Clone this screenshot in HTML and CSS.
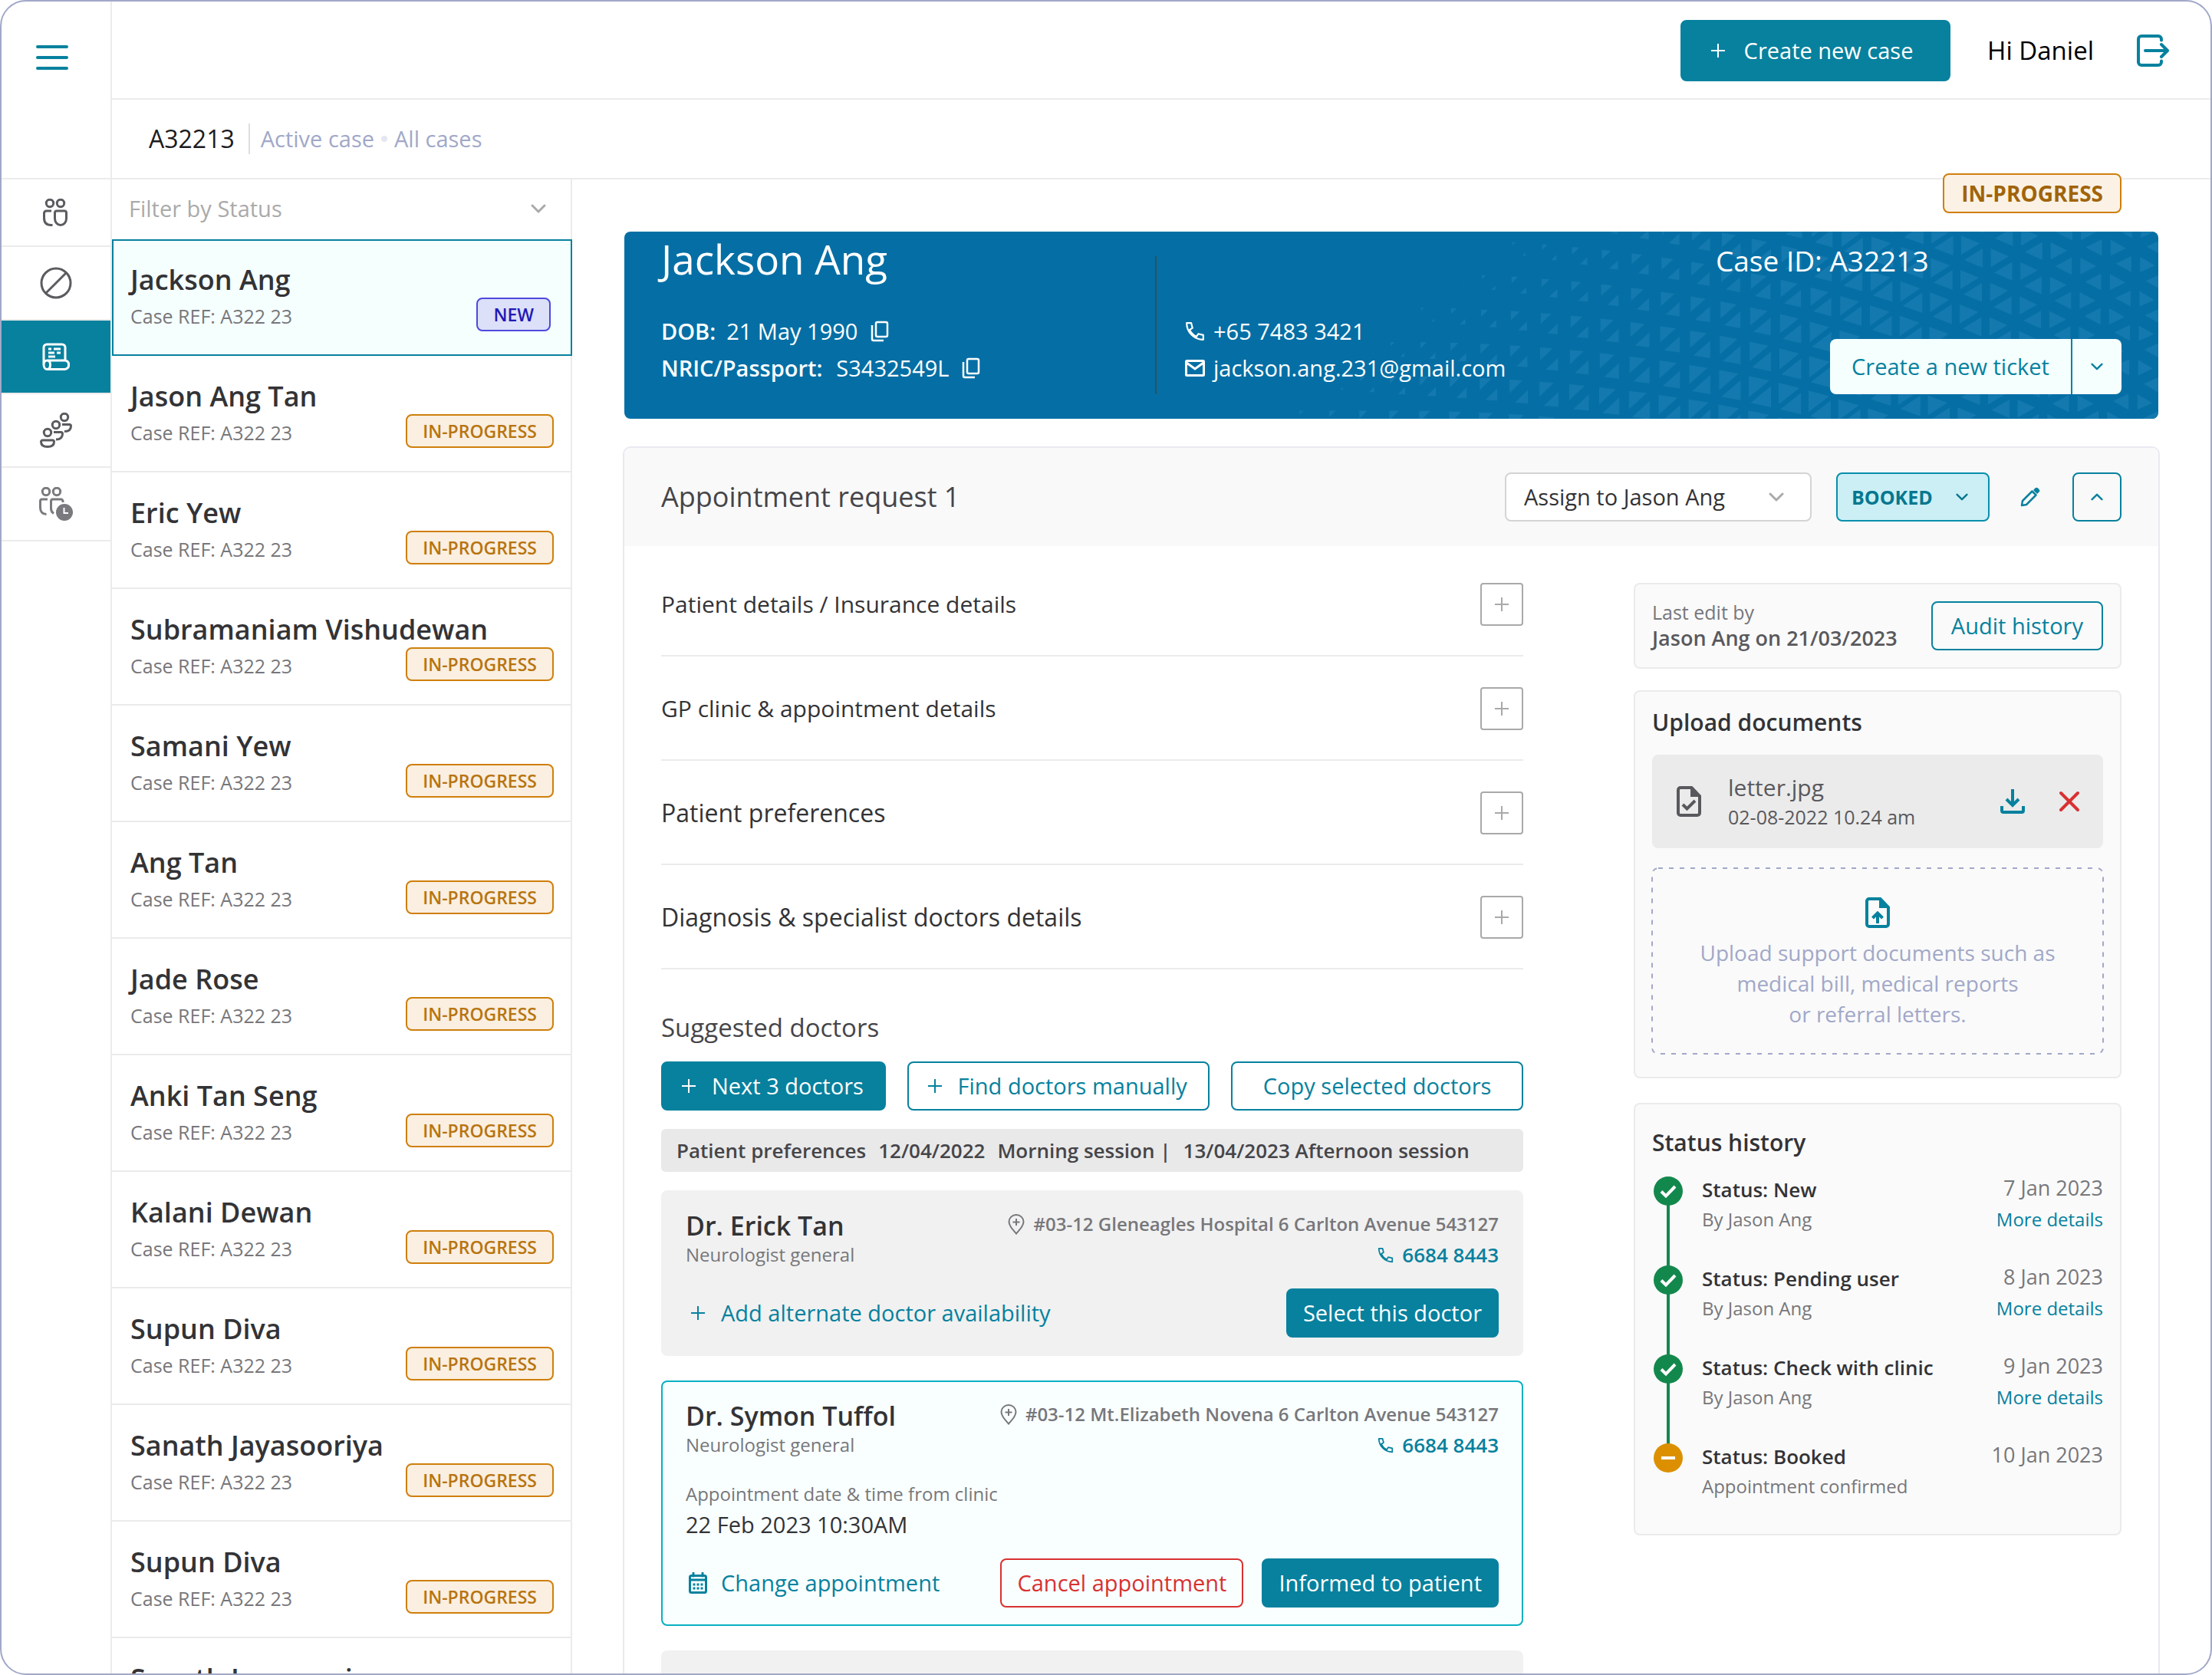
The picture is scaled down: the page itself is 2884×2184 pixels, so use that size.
FILE: index.html
```html
<!DOCTYPE html>
<html lang="en">
<head>
<meta charset="utf-8">
<title>Case A32213</title>
<meta name="viewport" content="width=device-width, initial-scale=1">
<link rel="stylesheet" href="styles.css">
</head>
<body>
<svg class="sprite" aria-hidden="true">
  <symbol id="plus" viewBox="0 0 20 20"><path d="M10 1v18M1 10h18" fill="none" stroke="currentColor" stroke-width="2"/></symbol>
  <symbol id="chevron" viewBox="0 0 20 12"><path d="M2 2l8 8 8-8" fill="none" stroke="currentColor" stroke-width="3" stroke-linecap="round" stroke-linejoin="round"/></symbol>
  <symbol id="phone" viewBox="0 0 24 24"><path d="M2 2h5.500l1.500 6-3.500 2.200c1.800 3.800 4.500 6.500 8.300 8.300l2.200-3.500 6 1.500V22C11 22 2 13 2 2z" fill="none" stroke="currentColor" stroke-width="2" stroke-linejoin="round"/></symbol>
  <symbol id="copy" viewBox="0 0 24 28"><path d="M9 2h11a2 2 0 0 1 2 2v15a2 2 0 0 1-2 2H9a2 2 0 0 1-2-2V4a2 2 0 0 1 2-2zM2 6v18a2 2 0 0 0 2 2h13" fill="none" stroke="currentColor" stroke-width="2.500"/></symbol>
  <symbol id="pin" viewBox="0 0 22 27"><path d="M11 25.500C5 18.500 1.500 14.500 1.500 10a9.500 9 0 0 1 19 0c0 4.500-3.500 8.500-9.500 15.500zM11 6v9M6.500 10.500h9" fill="none" stroke="currentColor" stroke-width="2"/></symbol>
</svg>
<div class="app">
  <nav class="rail" aria-label="Sections">
    <button class="rail-menu" type="button" aria-label="Menu">
      <svg width="42" height="34" viewBox="0 0 42 34"><path d="M2 3h38M2 17h38M2 31h38" stroke="currentColor" stroke-width="4" stroke-linecap="round"/></svg>
    </button>
    <a class="rail-item rail-first" href="#patients" aria-label="Patients">
      <svg width="32" height="36" viewBox="0 0 32 36" fill="none" stroke="currentColor" stroke-width="3"><circle cx="9" cy="6" r="4.700"/><circle cx="23" cy="6" r="4.700"/><path d="M11 16H4.500a3 3 0 0 0-3 3v6c0 6 3 9.500 9 9.500h2M18 16h10a2.500 2.500 0 0 1 2.500 2.500V26a7.500 8.500 0 0 1-15 0v-7.500A2.500 2.500 0 0 1 18 16z"/></svg>
    </a>
    <a class="rail-item" href="#blocked" aria-label="Blocked">
      <svg width="42" height="42" viewBox="0 0 42 42" fill="none" stroke="currentColor" stroke-width="3"><circle cx="21" cy="21" r="19"/><path d="M8 34L34 8"/></svg>
    </a>
    <a class="rail-item rail-active" href="#cases" aria-label="Cases">
      <svg width="36" height="36" viewBox="0 0 36 36" fill="none" stroke="currentColor" stroke-width="3"><path d="M2 29V6a4 4 0 0 1 4-4h20a4 4 0 0 1 4 4v17M6.500 23H30a5 5 0 0 1 4.500 6 5 5 0 0 1-5 5.500H6.500M6.500 23c-2.500 0-4.500 2-4.500 5.500s2 6 4.500 6 4-2.500 4-6-1.500-5.500-4-5.500z"/><path d="M8 8h4M15 8h9M8 13h8M19 13h5M8 18h9"/></svg>
    </a>
    <a class="rail-item" href="#teams" aria-label="Teams">
      <svg width="42" height="46" viewBox="0 0 42 46" fill="none" stroke="currentColor" stroke-width="3"><circle cx="10" cy="26" r="4.700"/><circle cx="21" cy="16" r="4.700"/><circle cx="32" cy="6" r="4.700"/><path d="M3.500 36h13a2 2 0 0 1 2 2c0 4-3 6.500-8.500 6.500S1.500 42 1.500 38a2 2 0 0 1 2-2zM18 25.500h9.500a2 2 0 0 1 2 2c0 5-3 7.500-8.500 7.500M29 15.500h9.500a2 2 0 0 1 2 2c0 5-3 7-8.500 7"/></svg>
    </a>
    <a class="rail-item rail-muted" href="#waiting" aria-label="Waiting">
      <svg width="44" height="44" viewBox="0 0 44 44" fill="none" stroke="currentColor" stroke-width="3"><circle cx="9" cy="6" r="4.700"/><circle cx="23" cy="6" r="4.700"/><path d="M11 16H4a2.500 2.500 0 0 0-2.500 2.500V27c0 5 3 8.500 8 8.500M31 20v-1.500a2.500 2.500 0 0 0-2.500-2.500H18a2.500 2.500 0 0 0-2.500 2.500V28c0 3 1 5 3.500 6.500"/><circle cx="33" cy="33" r="11" fill="currentColor" stroke="none"/><path d="M32.500 27v7H38" stroke="#fff" stroke-width="2"/></svg>
    </a>
  </nav>

  <div class="page">
    <header class="topbar">
      <button class="btn btn-solid btn-create" type="button"><svg class="i-plus"><use href="#plus"/></svg>Create new case</button>
      <span class="greeting">Hi Daniel</span>
      <button class="icon-btn logout" type="button" aria-label="Log out">
        <svg width="42" height="42" viewBox="0 0 42 42" fill="none" stroke="currentColor" stroke-width="4" stroke-linecap="round" stroke-linejoin="round"><path d="M32 7.500V6a4 4 0 0 0-4-4H6a4 4 0 0 0-4 4v30a4 4 0 0 0 4 4h22a4 4 0 0 0 4-4v-1.500M11 21h28M32 13l8 8-8 8"/></svg>
      </button>
    </header>

    <div class="crumbs">
      <strong class="crumb-id">A32213</strong>
      <a href="#active">Active case</a>
      <span class="crumb-dot"></span>
      <a href="#all">All cases</a>
    </div>

    <div class="work">
      <aside class="list">
        <label class="filter">
          <select aria-label="Filter by Status"><option>Filter by Status</option></select>
          <svg class="i-chev"><use href="#chevron"/></svg>
        </label>
        <article class="case case-active"><h3>Jackson Ang</h3><p>Case REF: A322 23 <span class="tag tag-new">NEW</span></p></article>
        <article class="case"><h3>Jason Ang Tan</h3><p>Case REF: A322 23 <span class="tag">IN-PROGRESS</span></p></article>
        <article class="case"><h3>Eric Yew</h3><p>Case REF: A322 23 <span class="tag">IN-PROGRESS</span></p></article>
        <article class="case"><h3>Subramaniam Vishudewan</h3><p>Case REF: A322 23 <span class="tag">IN-PROGRESS</span></p></article>
        <article class="case"><h3>Samani Yew</h3><p>Case REF: A322 23 <span class="tag">IN-PROGRESS</span></p></article>
        <article class="case"><h3>Ang Tan</h3><p>Case REF: A322 23 <span class="tag">IN-PROGRESS</span></p></article>
        <article class="case"><h3>Jade Rose</h3><p>Case REF: A322 23 <span class="tag">IN-PROGRESS</span></p></article>
        <article class="case"><h3>Anki Tan Seng</h3><p>Case REF: A322 23 <span class="tag">IN-PROGRESS</span></p></article>
        <article class="case"><h3>Kalani Dewan</h3><p>Case REF: A322 23 <span class="tag">IN-PROGRESS</span></p></article>
        <article class="case"><h3>Supun Diva</h3><p>Case REF: A322 23 <span class="tag">IN-PROGRESS</span></p></article>
        <article class="case"><h3>Sanath Jayasooriya</h3><p>Case REF: A322 23 <span class="tag">IN-PROGRESS</span></p></article>
        <article class="case"><h3>Supun Diva</h3><p>Case REF: A322 23 <span class="tag">IN-PROGRESS</span></p></article>
        <article class="case"><h3>Sanath Jayasooriya</h3></article>
      </aside>

      <main class="main">
        <span class="tag tag-big">IN-PROGRESS</span>

        <section class="banner">
          <svg class="banner-pattern" width="1160" height="244" viewBox="840 0 1160 244" aria-hidden="true"><path id="pattern"/></svg>
          <div class="who">
            <h1>Jackson Ang</h1>
            <p><b>DOB:</b><span class="dob">21 May 1990</span><button class="icon-btn" type="button" aria-label="Copy date of birth"><svg class="i-copy"><use href="#copy"/></svg></button></p>
            <p><b>NRIC/Passport:</b><span class="nric">S3432549L</span><button class="icon-btn" type="button" aria-label="Copy NRIC"><svg class="i-copy"><use href="#copy"/></svg></button></p>
          </div>
          <div class="contact">
            <p><svg class="i-contact"><use href="#phone"/></svg>+65 7483 3421</p>
            <p><svg class="i-contact" viewBox="0 0 26 24" fill="none" stroke="currentColor" stroke-width="3"><rect x="1.500" y="2.500" width="23" height="19" rx="1"/><path d="M2 5l11 8 11-8"/></svg>jackson.ang.231@gmail.com</p>
          </div>
          <div class="case-side">
            <p class="case-id">Case ID: A32213</p>
            <div class="split">
              <button type="button">Create a new ticket</button>
              <button class="split-more" type="button" aria-label="More ticket options"><svg class="i-chev-s"><use href="#chevron"/></svg></button>
            </div>
          </div>
        </section>

        <section class="panel">
          <header class="panel-head">
            <h2>Appointment request 1</h2>
            <label class="assign">
              <select aria-label="Assignee"><option>Assign to Jason Ang</option></select>
              <svg class="i-chev"><use href="#chevron"/></svg>
            </label>
            <button class="booked" type="button">BOOKED<svg class="i-chev-s"><use href="#chevron"/></svg></button>
            <button class="icon-btn edit" type="button" aria-label="Edit">
              <svg width="26" height="26" viewBox="0 0 26 26"><path d="M2 24l1-6L15.500 5.500l5 5L8 23z" fill="none" stroke="currentColor" stroke-width="2.500" stroke-linejoin="round"/><path d="M17 4l2.500-2.500a2.500 2.500 0 0 1 3.500 0L24.500 3a2.500 2.500 0 0 1 0 3.500L22 9z" fill="currentColor"/></svg>
            </button>
            <button class="fold" type="button" aria-label="Collapse"><svg class="i-chev-s"><use href="#chevron"/></svg></button>
          </header>

          <div class="panel-body">
            <div class="details">
              <div class="row"><h4>Patient details / Insurance details</h4><button type="button" aria-label="Expand"><svg class="i-plus"><use href="#plus"/></svg></button></div>
              <div class="row"><h4>GP clinic &amp; appointment details</h4><button type="button" aria-label="Expand"><svg class="i-plus"><use href="#plus"/></svg></button></div>
              <div class="row row-large"><h4>Patient preferences</h4><button type="button" aria-label="Expand"><svg class="i-plus"><use href="#plus"/></svg></button></div>
              <div class="row row-large"><h4>Diagnosis &amp; specialist doctors details</h4><button type="button" aria-label="Expand"><svg class="i-plus"><use href="#plus"/></svg></button></div>

              <h3 class="suggested">Suggested doctors</h3>
              <div class="actions">
                <button class="btn btn-solid btn-left" type="button"><svg class="i-plus"><use href="#plus"/></svg>Next 3 doctors</button>
                <button class="btn btn-left" type="button"><svg class="i-plus"><use href="#plus"/></svg>Find doctors manually</button>
                <button class="btn" type="button">Copy selected doctors</button>
              </div>
              <p class="prefs"><span>Patient preferences</span><span>12/04/2022</span><span>Morning session |</span><span>13/04/2023 Afternoon session</span></p>

              <article class="doctor">
                <div class="doctor-head">
                  <div><h3>Dr. Erick Tan</h3><p>Neurologist general</p></div>
                  <div class="doctor-where">
                    <p><svg class="i-pin"><use href="#pin"/></svg>#03-12 Gleneagles Hospital 6 Carlton Avenue 543127</p>
                    <p><a href="tel:66848443"><svg class="i-phone"><use href="#phone"/></svg>6684 8443</a></p>
                  </div>
                </div>
                <div class="doctor-foot">
                  <button class="text-btn" type="button"><svg class="i-plus"><use href="#plus"/></svg>Add alternate doctor availability</button>
                  <button class="btn btn-solid" type="button">Select this doctor</button>
                </div>
              </article>

              <article class="doctor doctor-picked">
                <div class="doctor-head">
                  <div><h3>Dr. Symon Tuffol</h3><p>Neurologist general</p></div>
                  <div class="doctor-where">
                    <p><svg class="i-pin"><use href="#pin"/></svg>#03-12 Mt.Elizabeth Novena 6 Carlton Avenue 543127</p>
                    <p><a href="tel:66848443"><svg class="i-phone"><use href="#phone"/></svg>6684 8443</a></p>
                  </div>
                </div>
                <dl class="slot"><dt>Appointment date &amp; time from clinic</dt><dd>22 Feb 2023 10:30AM</dd></dl>
                <div class="doctor-foot">
                  <button class="text-btn text-btn-cal" type="button"><svg class="i-cal" viewBox="0 0 24 28"><path d="M6 1v4M18 1v4" stroke="currentColor" stroke-width="3" stroke-linecap="round"/><rect x="1.500" y="4.500" width="21" height="22" rx="2" fill="none" stroke="currentColor" stroke-width="3"/><path d="M2 10h20" stroke="currentColor" stroke-width="3"/><path d="M5.500 16h13M5.500 21h13" stroke="currentColor" stroke-width="3" stroke-dasharray="3 2"/></svg>Change appointment</button>
                  <button class="btn btn-danger" type="button">Cancel appointment</button>
                  <button class="btn btn-solid" type="button">Informed to patient</button>
                </div>
              </article>

              <article class="doctor doctor-next"></article>
            </div>

            <aside class="side">
              <section class="box edited">
                <p><span>Last edit by</span><b>Jason Ang on 21/03/2023</b></p>
                <button class="btn btn-wide" type="button">Audit history</button>
              </section>

              <section class="box uploads">
                <h3>Upload documents</h3>
                <div class="file">
                  <svg width="32" height="40" viewBox="0 0 32 40"><path d="M5 2h14.500L30 13v22a3 3 0 0 1-3 3H5a3 3 0 0 1-3-3V5a3 3 0 0 1 3-3z" fill="none" stroke="currentColor" stroke-width="4"/><path d="M18 2l12 12H18z" fill="currentColor"/><path d="M8 24l5.500 5.500L24 19" fill="none" stroke="currentColor" stroke-width="4"/></svg>
                  <p><span>letter.jpg</span><small>02-08-2022 10.24 am</small></p>
                  <button class="icon-btn" type="button" aria-label="Download"><svg width="32" height="32" viewBox="0 0 32 32" fill="none" stroke="currentColor" stroke-width="4"><path d="M16 0v21M8 13l8 8 8-8M2 22v6a2 2 0 0 0 2 2h24a2 2 0 0 0 2-2v-6"/></svg></button>
                  <button class="icon-btn remove" type="button" aria-label="Remove"><svg width="28" height="28" viewBox="0 0 28 28"><path d="M3 3l22 22M25 3L3 25" stroke="currentColor" stroke-width="4" stroke-linecap="round"/></svg></button>
                </div>
                <button class="drop" type="button">
                  <svg class="drop-frame" aria-hidden="true"><rect width="100%" height="100%" rx="8"/></svg>
                  <svg width="32" height="40" viewBox="0 0 32 40"><path d="M5 2h14.500L30 13v22a3 3 0 0 1-3 3H5a3 3 0 0 1-3-3V5a3 3 0 0 1 3-3z" fill="none" stroke="currentColor" stroke-width="4"/><path d="M18 2l12 12H18z" fill="currentColor"/><path d="M16 34V21M9.500 27l6.500-6.500 6.500 6.500" fill="none" stroke="currentColor" stroke-width="4"/></svg>
                  <span>Upload support documents such as<br>medical bill, medical reports<br>or referral letters.</span>
                </button>
              </section>

              <section class="box history">
                <h3>Status history</h3>
                <ol>
                  <li><svg class="dot" viewBox="0 0 38 38"><path d="M10 19.500l6 6 12-12.500"/></svg><b>Status: New</b><time>7 Jan 2023</time><span>By Jason Ang</span><a href="#d1">More details</a></li>
                  <li><svg class="dot" viewBox="0 0 38 38"><path d="M10 19.500l6 6 12-12.500"/></svg><b>Status: Pending user</b><time>8 Jan 2023</time><span>By Jason Ang</span><a href="#d2">More details</a></li>
                  <li><svg class="dot" viewBox="0 0 38 38"><path d="M10 19.500l6 6 12-12.500"/></svg><b>Status: Check with clinic</b><time>9 Jan 2023</time><span>By Jason Ang</span><a href="#d3">More details</a></li>
                  <li><svg class="dot dot-wait" viewBox="0 0 38 38"><path d="M10 19h18"/></svg><b>Status: Booked</b><time>10 Jan 2023</time><span>Appointment confirmed</span></li>
                </ol>
              </section>
            </aside>
          </div>
        </section>
      </main>
    </div>
  </div>
</div>
<script src="pattern.js"></script>
</body>
</html>
```
FILE: styles.css
```css
* { box-sizing: border-box; }

:root {
  --teal: #07819e;
  --line: #ebebeb;
  --ink: #333336;
  --grey: #77777b;
  --lilac: #a1a8c8;
}

body, h1, h2, h3, h4, p, ol, dl, dd { margin: 0; padding: 0; }

body {
  background: #fff;
  color: var(--ink);
  font-family: "Open Sans", "Noto Sans", sans-serif;
  font-size: 29px;
  line-height: 40px;
}

button, select { font: inherit; color: inherit; cursor: pointer; }
a { color: inherit; text-decoration: none; }
svg { display: block; flex: none; }
.sprite { position: absolute; width: 0; height: 0; }

.app {
  display: grid;
  grid-template-columns: 144px 1fr;
  height: 100vh;
  border: 2px solid var(--lilac);
  border-radius: 34px;
  overflow: hidden;
}

/* icons */
.i-plus { width: 20px; height: 20px; }
.i-chev { width: 20px; height: 12px; color: #aaa; }
.i-chev-s { width: 16px; height: 10px; }
.i-copy { width: 24px; height: 28px; }
.i-contact { width: 26px; height: 26px; }
.i-pin { width: 22px; height: 27px; }
.i-phone { width: 21px; height: 21px; }
.i-cal { width: 24px; height: 28px; }

/* buttons */
.btn {
  display: flex;
  align-items: center;
  justify-content: center;
  height: 64px;
  padding: 0 20px;
  border: 2px solid var(--teal);
  border-radius: 8px;
  background: none;
  color: var(--teal);
  white-space: nowrap;
}
.btn-solid { background: var(--teal); color: #fff; }
.btn-danger { border-color: #d83131; color: #d83131; }
.btn-left { justify-content: flex-start; gap: 20px; padding: 0 22px 0 24px; }
.btn-wide { padding: 0 24px; }
.icon-btn { display: flex; padding: 0; border: 0; background: none; color: inherit; }

/* rail */
.rail { border-right: 2px solid var(--line); color: #5b5b60; }
.rail-menu {
  display: block;
  width: 100%;
  height: 232px;
  padding: 56px 0 0 45px;
  border: 0;
  border-bottom: 2px solid var(--line);
  background: none;
  color: var(--teal);
}
.rail-menu svg { margin-bottom: 142px; }
.rail-item {
  display: flex;
  align-items: center;
  justify-content: center;
  height: 96px;
  border-bottom: 2px solid var(--line);
}
.rail-first { height: 88px; padding-right: 2px; }
.rail-active { background: var(--teal); color: #fff; }
.rail-muted { color: #7a7a7e; }

/* top */
.page { display: flex; flex-direction: column; min-width: 0; min-height: 0; }
.topbar {
  display: flex;
  flex: none;
  align-items: center;
  justify-content: flex-end;
  height: 128px;
  padding: 2px 54px 0 0;
  border-bottom: 2px solid var(--line);
}
.btn-create { width: 352px; height: 80px; gap: 24px; padding-right: 30px; }
.greeting { margin: 0 56px 0 48px; color: #000; font-size: 33px; }
.logout { color: var(--teal); }
.crumbs {
  display: flex;
  flex: none;
  align-items: center;
  height: 104px;
  padding-left: 48px;
  border-bottom: 2px solid var(--line);
  color: var(--lilac);
}
.crumb-id {
  margin-right: 14px;
  padding-right: 18px;
  border-right: 2px solid #dedee2;
  color: #1c1c1e;
  font-size: 32px;
  font-weight: 400;
}
.crumb-dot { width: 8px; height: 8px; margin: 0 9px; border-radius: 50%; background: #e6e6f0; }

/* case list */
.work { display: grid; flex: 1; grid-template-columns: 600px 1fr; min-height: 0; }
.list { min-height: 0; border-right: 2px solid var(--line); }
.filter { display: flex; align-items: center; height: 78px; padding: 0 32px 2px 22px; color: #aaa; }
select { flex: 1; min-width: 0; padding: 0; border: 0; background: none; appearance: none; }
.case {
  height: 152px;
  padding: 28px 22px 0 24px;
  border: 0 solid var(--line);
  border-width: 2px 0;
  border-top-color: transparent;
}
.case-active {
  margin-right: -2px;
  padding: 28px 26px 0 22px;
  border: 2px solid var(--teal);
  background: #f5fffe;
}
.case h3 { font-size: 36px; font-weight: 600; line-height: 46px; white-space: nowrap; }
.case p {
  display: flex;
  align-items: flex-start;
  justify-content: space-between;
  color: var(--grey);
  font-size: 25px;
  font-weight: 500;
  line-height: 48px;
}
.tag {
  padding: 0 20px;
  border: 2px solid #cf7f0c;
  border-radius: 8px;
  background: #faefe0;
  color: #b87410;
  font-size: 23px;
  font-weight: 600;
  line-height: 40px;
}
.tag-new { border-color: #4d49dd; background: #dce0f8; color: #2219b5; }

/* main column */
.main { position: relative; min-width: 0; padding: 68px 66px 0; }
.tag-big {
  position: absolute;
  top: -8px;
  right: 116px;
  padding: 0 22px;
  background: #fbf2e5;
  color: #a0640a;
  font-size: 28px;
  font-weight: 700;
  line-height: 48px;
}

.banner {
  display: grid;
  position: relative;
  grid-template-columns: 644px 1fr 529px;
  height: 244px;
  margin: 0 2px 36px;
  padding: 0 48px;
  border-radius: 8px;
  overflow: hidden;
  background: #056fa5;
  color: #fff;
}
.banner-pattern { position: absolute; top: 0; right: 0; fill: #1479ae; }
.who, .contact, .case-side { position: relative; }
.who h1 { padding: 6px 0 40px; font-size: 53px; font-weight: 400; line-height: 60px; }
.who p, .contact p { display: flex; align-items: center; height: 48px; }
.who b { font-weight: 600; }
.dob { margin: 0 17px 0 14px; }
.nric { margin: 0 17px 0 18px; }
.contact { margin: 32px 0; padding: 74px 0 0 37px; border-left: 2px solid #2c5166; }
.contact p { gap: 11px; }
.case-side { display: flex; flex-direction: column; justify-content: space-between; padding: 16px 0 32px; }
.case-id { font-size: 37px; line-height: 44px; }
.split { display: flex; align-self: flex-end; height: 72px; border-radius: 8px; overflow: hidden; }
.split button { width: 314px; padding: 0; border: 0; background: #f5fffe; color: var(--teal); }
.split .split-more { display: grid; place-items: center; width: 66px; border-left: 2px solid var(--teal); }

/* appointment panel */
.panel { border: 2px solid #e9e9f2; border-radius: 10px 10px 0 0; overflow: hidden; }
.panel-head { display: flex; align-items: center; height: 128px; padding: 0 48px; background: #f9f9f9; }
.panel-head h2 { flex: 1; color: #454549; font-size: 36px; font-weight: 400; }
.assign {
  display: flex;
  align-items: center;
  width: 400px;
  height: 64px;
  margin-right: 32px;
  padding: 0 34px 0 23px;
  border: 2px solid #d4d4d4;
  border-radius: 8px;
  background: #fff;
}
.booked {
  display: flex;
  align-items: center;
  justify-content: space-between;
  width: 200px;
  height: 64px;
  padding: 0 26px 0 18px;
  border: 2px solid #078fac;
  border-radius: 8px;
  background: #cbeff5;
  color: #06778f;
  font-size: 25px;
  font-weight: 700;
}
.edit { margin: 0 42px 0 40px; color: var(--teal); }
.fold {
  display: grid;
  place-items: center;
  width: 64px;
  height: 64px;
  border: 2px solid var(--teal);
  border-radius: 8px;
  background: none;
  color: var(--teal);
}
.fold svg { transform: rotate(180deg); }

.panel-body { display: grid; grid-template-columns: 1fr 636px; gap: 144px; padding: 48px 48px 0; background: #fff; }
.row {
  display: flex;
  align-items: center;
  justify-content: space-between;
  padding: 40px 0 38px;
  border-bottom: 2px solid var(--line);
}
.row:first-child { padding-top: 0; }
.row h4 { font-size: 30px; font-weight: 400; }
.row-large h4 { font-size: 32px; }
.row button {
  display: grid;
  place-items: center;
  width: 56px;
  height: 56px;
  padding: 0;
  border: 2px solid #a9a9a9;
  border-radius: 4px;
  background: none;
  color: #a9a9a9;
}
.suggested { margin: 56px 0 24px; color: #454549; font-size: 33px; font-weight: 400; }
.actions { display: grid; grid-template-columns: 292fr 394fr 380fr; gap: 28px; }
.prefs {
  display: flex;
  gap: 16px;
  margin: 24px 0;
  padding: 0 20px;
  border-radius: 6px;
  background: #e9e9e9;
  color: #454549;
  font-size: 26px;
  font-weight: 600;
  line-height: 56px;
  white-space: nowrap;
}
.doctor { margin-bottom: 32px; padding: 22px 30px; border: 2px solid #f1f1f1; border-radius: 8px; background: #f1f1f1; }
.doctor-picked { border-color: #06b0c3; background: #f9ffff; }
.doctor-next { height: 216px; }
.doctor-head { display: flex; justify-content: space-between; color: var(--grey); font-size: 24px; font-weight: 500; }
.doctor-head h3 { color: var(--ink); font-size: 34px; font-weight: 600; line-height: 44px; }
.doctor-head p { line-height: 32px; }
.doctor-where { display: flex; flex-direction: column; align-items: flex-end; font-weight: 600; }
.doctor-where p, .doctor-where a { display: flex; align-items: center; gap: 11px; line-height: 40px; }
.doctor-where a { color: var(--teal); font-size: 26px; }
.slot { margin-top: 24px; }
.slot dt { color: var(--grey); font-size: 24px; font-weight: 500; }
.doctor-foot { display: flex; gap: 24px; margin-top: 24px; }
.text-btn {
  display: flex;
  align-items: center;
  gap: 20px;
  margin-right: auto;
  padding: 0 0 0 6px;
  border: 0;
  background: none;
  color: var(--teal);
  white-space: nowrap;
}
.text-btn-cal { gap: 18px; padding-left: 4px; }

/* side column */
.box { border: 2px solid var(--line); border-radius: 8px; background: #fafafa; }
.box h3 { font-size: 30px; font-weight: 600; line-height: 44px; }
.edited { display: flex; align-items: center; justify-content: space-between; height: 112px; padding: 0 22px; }
.edited span, .edited b { display: block; }
.edited span { color: var(--grey); font-size: 25px; line-height: 32px; }
.edited b { color: #59595d; font-size: 27px; font-weight: 600; line-height: 36px; }
.uploads { margin: 28px 0 32px; padding: 18px 22px 30px; }
.file {
  display: flex;
  align-items: center;
  height: 122px;
  margin: 20px 0 26px;
  padding: 0 30px 0 32px;
  border-radius: 8px;
  background: #ebebeb;
  color: #59595d;
}
.file p { flex: 1; margin-left: 35px; }
.file span, .file small { display: block; }
.file span { font-size: 30px; line-height: 40px; }
.file small { font-size: 25px; line-height: 36px; }
.file .icon-btn { color: var(--teal); }
.file .remove { margin-left: 44px; color: #d83131; }
.drop {
  display: flex;
  position: relative;
  flex-direction: column;
  align-items: center;
  gap: 12px;
  width: 100%;
  padding: 38px 0 32px;
  border: 0;
  background: none;
  color: var(--teal);
}
.drop span { color: var(--lilac); font-size: 28px; }
.drop-frame { position: absolute; inset: 0; width: 100%; height: 100%; overflow: visible; fill: none; stroke: var(--lilac); stroke-width: 2; stroke-dasharray: 6 8; }
.history { padding: 28px 22px 42px; }
.history ol { margin-top: 20px; list-style: none; }
.history li {
  display: grid;
  position: relative;
  grid-template-columns: 1fr auto;
  align-content: start;
  min-height: 116px;
  padding-left: 65px;
  color: var(--grey);
  font-size: 24px;
  font-weight: 500;
  line-height: 38px;
}
.history li:last-child { min-height: 78px; }
.history li:not(:last-child)::before {
  content: "";
  position: absolute;
  top: 30px;
  bottom: -10px;
  left: 19px;
  width: 4px;
  background: #13884d;
}
.history b { color: var(--ink); font-size: 26px; font-weight: 600; }
.history time { font-size: 27px; font-weight: 400; line-height: 34px; text-align: right; }
.history a { color: var(--teal); text-align: right; }
.history span, .history a { line-height: 40px; }
.dot {
  position: absolute;
  top: 2px;
  left: 2px;
  width: 38px;
  height: 38px;
  border-radius: 50%;
  background: #13884d;
  fill: none;
  stroke: #fff;
  stroke-width: 4;
}
.dot-wait { background: #dc9000; }
```
FILE: pattern.js
```js
// Draws the banner's triangle mesh: pairs of triangles whose rows bend
// downwards and whose size grows from left to right.
(function () {
  var d = '';
  function tri(x1, y1, x2, y2, x3, y3) {
    d += 'M' + x1.toFixed(1) + ' ' + y1.toFixed(1) + 'L' + x2.toFixed(1) + ' ' + y2.toFixed(1) + 'L' + x3.toFixed(1) + ' ' + y3.toFixed(1) + 'Z';
  }
  for (var row = -9; row <= 6; row++) {
    for (var col = -1; col <= 29; col++) {
      var x = 881 + 39 * col;
      var k = Math.max(0, (x - 1009) / 38.8);
      var over = Math.max(0, k - 10);
      var bend = k < 10 ? 0.315 * k * k : 31.5 + 6.3 * over + 0.555 * over * over;
      var slope = k < 10 ? 0.63 * k : 6.3 + 1.11 * over;
      var y = 9.5 + 44.8 * (row - 1) + bend;
      if (y < -50 || y > 250) continue;
      x += 4 - 0.02 * y;
      var t = (x - (1131 - 58 * (row - 1))) / 520;
      if (row < 1) t = (x - 1170) / 480;
      if (t <= 0) continue;
      var s = Math.min(1, Math.pow(t, 0.65));
      var fade = Math.max(0, (x - 1600) / 400) * 0.3;
      var w = 27 * (s - fade), h = 28 * (s - fade);
      var W = 15 + 14 * s - 8 * fade, H = 14 + 27 * s + 6 * fade;
      var lean = slope * w / 39;
      tri(x, y, x, y + h, x + w, y + lean);
      tri(x + W, y + H, x + W, y + H - h, x + W - w, y + H - lean);
    }
  }
  document.getElementById('pattern').setAttribute('d', d);
})();
```
